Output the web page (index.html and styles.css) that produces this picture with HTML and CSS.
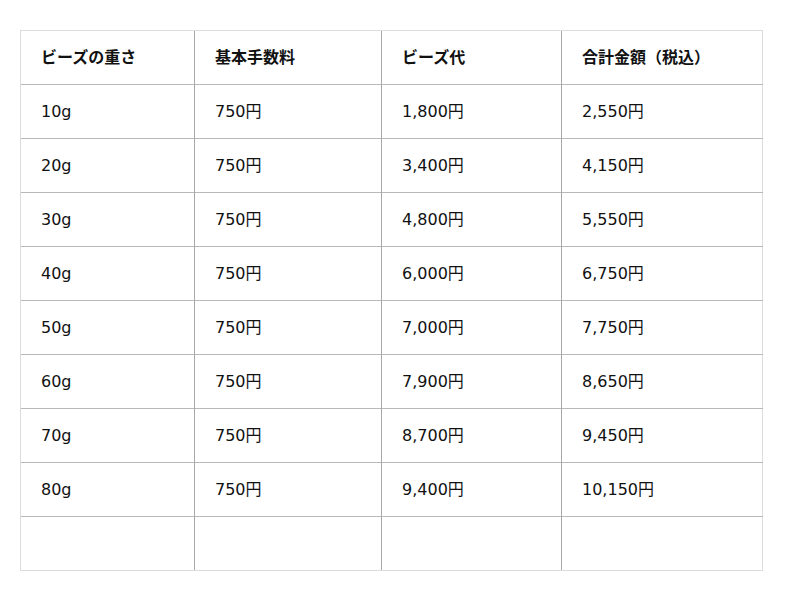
FILE: index.html
```html
<!DOCTYPE html>
<html lang="ja">
<head>
<meta charset="utf-8">
<link rel="stylesheet" href="styles.css">
</head>
<body>
<table class="price-table">
  <colgroup>
    <col class="c1"><col class="c2"><col class="c3"><col class="c4">
  </colgroup>
  <thead>
    <tr><th>ビーズの重さ</th><th>基本手数料</th><th>ビーズ代</th><th>合計金額（税込）</th></tr>
  </thead>
  <tbody>
    <tr><td>10g</td><td>750円</td><td>1,800円</td><td>2,550円</td></tr>
    <tr><td>20g</td><td>750円</td><td>3,400円</td><td>4,150円</td></tr>
    <tr><td>30g</td><td>750円</td><td>4,800円</td><td>5,550円</td></tr>
    <tr><td>40g</td><td>750円</td><td>6,000円</td><td>6,750円</td></tr>
    <tr><td>50g</td><td>750円</td><td>7,000円</td><td>7,750円</td></tr>
    <tr><td>60g</td><td>750円</td><td>7,900円</td><td>8,650円</td></tr>
    <tr><td>70g</td><td>750円</td><td>8,700円</td><td>9,450円</td></tr>
    <tr><td>80g</td><td>750円</td><td>9,400円</td><td>10,150円</td></tr>
    <tr><td></td><td></td><td></td><td></td></tr>
  </tbody>
</table>
</body>
</html>
```
FILE: styles.css
```css
html, body {
  margin: 0;
  padding: 0;
  background: #ffffff;
}
body {
  padding: 30px 0 0 20px;
  font-family: "DejaVu Sans", "Noto Sans CJK JP", sans-serif;
  color: #111;
}
.price-table {
  border-collapse: collapse;
  table-layout: fixed;
  width: 742px;
  border: 1px solid #dcdcdc;
  font-size: 16px;
  line-height: 24px;
}
.c1 { width: 174px; }
.c2 { width: 187px; }
.c3 { width: 180px; }
.c4 { width: 201px; }
.price-table th,
.price-table td {
  height: 54px;
  box-sizing: border-box;
  padding: 0 0 0 20px;
  text-align: left;
  vertical-align: middle;
  border-top: 1px solid #b8b8b8;
  border-left: 1px solid #a8a8a8;
}
.price-table th {
  font-weight: bold;
  border-top: 1px solid #dcdcdc;
}
.price-table th:first-child,
.price-table td:first-child {
  border-left: 1px solid #dcdcdc;
}
.price-table tbody tr:last-child td {
  border-bottom: 1px solid #dcdcdc;
}
```
